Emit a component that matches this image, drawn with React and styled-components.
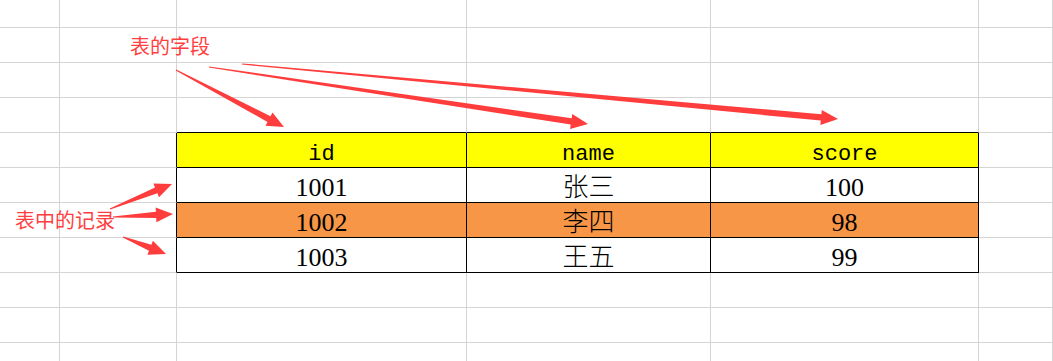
import styled, { createGlobalStyle } from "styled-components";

const GlobalStyle = createGlobalStyle`
  html, body {
    margin: 0;
    padding: 0;
    background: #fff;
  }
  body {
    width: 1053px;
    height: 361px;
    overflow: hidden;
    font-family: "Liberation Serif", "Noto Sans CJK SC", serif;
  }
`;

const COLS = [60, 117, 290, 244, 268, 74];
const ROW_COUNT = 11;
const HEAD_ROW = 4;
const FIRST_COL = 2;

const header = ["id", "name", "score"];
const records = [
  { cells: ["1001", "张三", "100"] },
  { cells: ["1002", "李四", "98"], fill: "#f79646" },
  { cells: ["1003", "王五", "99"] },
];

const arrows = [
  { from: [176, 70], to: [284, 127] },
  { from: [209, 67], to: [588, 124] },
  { from: [242, 64], to: [838, 119] },
  { from: [110, 209], to: [172, 184] },
  { from: [113, 217], to: [173, 214] },
  { from: [123, 237], to: [166, 254] },
];

function arrowPoints([x0, y0], [x1, y1]) {
  const len = Math.hypot(x1 - x0, y1 - y0);
  const dx = (x1 - x0) / len;
  const dy = (y1 - y0) / len;
  const nx = -dy;
  const ny = dx;
  const headLen = 17;
  const bx = x1 - dx * headLen;
  const by = y1 - dy * headLen;
  const p = (x, y, w) => `${(x + nx * w).toFixed(1)},${(y + ny * w).toFixed(1)}`;
  return [
    p(x0, y0, 0.6),
    p(bx, by, 3.2),
    p(bx, by, 7.5),
    `${x1},${y1}`,
    p(bx, by, -7.5),
    p(bx, by, -3.2),
    p(x0, y0, -0.6),
  ].join(" ");
}

export default function App() {
  const cells = [];
  for (let r = 0; r < ROW_COUNT; r++) {
    for (let c = 0; c < COLS.length; c++) {
      const inTableRows = r >= HEAD_ROW && r <= HEAD_ROW + records.length;
      const inTableCols = c >= FIRST_COL && c < FIRST_COL + header.length;
      const edgeRight = inTableRows && c >= FIRST_COL - 1 && c < FIRST_COL + header.length;
      const edgeBottom =
        inTableCols && r >= HEAD_ROW - 1 && r <= HEAD_ROW + records.length;

      let fill;
      let content = null;
      if (inTableRows && inTableCols) {
        const i = c - FIRST_COL;
        if (r === HEAD_ROW) {
          fill = "#ffff00";
          content = <HeadText>{header[i]}</HeadText>;
        } else {
          const rec = records[r - HEAD_ROW - 1];
          fill = rec.fill;
          content = <BodyText>{rec.cells[i]}</BodyText>;
        }
      }

      cells.push(
        <Cell key={`${r}-${c}`} $edgeRight={edgeRight} $edgeBottom={edgeBottom} $fill={fill}>
          {content}
        </Cell>
      );
    }
  }

  return (
    <>
      <GlobalStyle />
      <Page>
        <Sheet>{cells}</Sheet>
        <Overlay width="1053" height="361" viewBox="0 0 1053 361">
          {arrows.map((a, i) => (
            <polygon key={i} points={arrowPoints(a.from, a.to)} fill="#ff3d3d" />
          ))}
        </Overlay>
        <Note $x={130} $y={36}>表的字段</Note>
        <Note $x={15} $y={210}>表中的记录</Note>
      </Page>
    </>
  );
}

const Page = styled.div`
  position: relative;
  width: 1053px;
  height: 361px;
  overflow: hidden;
  background: #fff;
`;

const Sheet = styled.div`
  display: grid;
  grid-template-columns: ${COLS.map((w) => `${w}px`).join(" ")};
  grid-auto-rows: 35px;
  margin-top: -7px;
`;

const Cell = styled.div`
  box-sizing: border-box;
  border-right: 1px solid ${(p) => (p.$edgeRight ? "#000" : "#d4d4d4")};
  border-bottom: 1px solid ${(p) => (p.$edgeBottom ? "#000" : "#d4d4d4")};
  background: ${(p) => p.$fill || "transparent"};
  display: flex;
  align-items: flex-end;
  justify-content: center;
  overflow: hidden;
  white-space: nowrap;
  color: #000;
`;

const HeadText = styled.span`
  font-family: "Liberation Mono", monospace;
  font-size: 22px;
  line-height: 24px;
`;

const BodyText = styled.span`
  font-family: "Liberation Serif", "Noto Sans CJK SC", serif;
  font-size: 26px;
  font-weight: 300;
  line-height: 28px;
`;

const Overlay = styled.svg`
  position: absolute;
  left: 0;
  top: 0;
  pointer-events: none;
`;

const Note = styled.div`
  position: absolute;
  left: ${(p) => p.$x}px;
  top: ${(p) => p.$y}px;
  font-family: "Noto Sans CJK SC", sans-serif;
  font-size: 20px;
  line-height: 20px;
  color: #ff3f3f;
  white-space: nowrap;
`;
